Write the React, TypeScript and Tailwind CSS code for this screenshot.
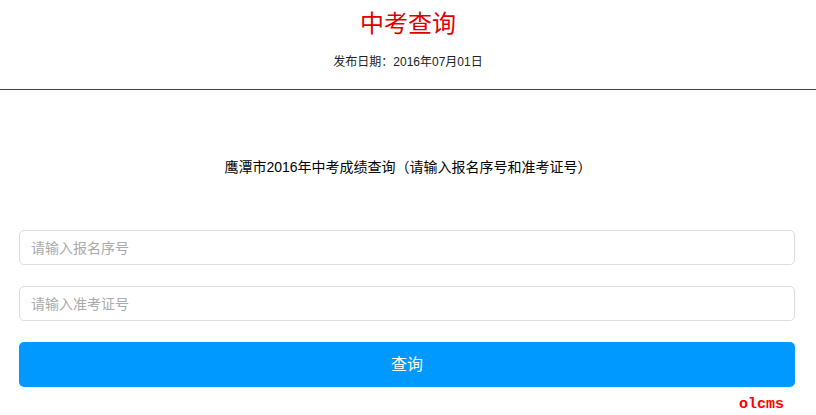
import React from "react";

export default function App() {
  return (
    <div className="w-[816px] h-[415px] bg-white overflow-hidden" style={{ fontFamily: '"Liberation Sans", "Noto Sans CJK SC", sans-serif' }}>
      <div className="h-[89px] flex flex-col items-center">
        <div className="mt-[8px] h-[32px] leading-[32px] text-[24px] text-[#dd0000]" style={{ fontFamily: '"Liberation Serif", "Noto Sans CJK SC", serif' }}>中考查询</div>
        <div className="mt-[14px] h-[16px] leading-[16px] text-[12px] text-[#222]">发布日期：2016年07月01日</div>
      </div>
      <div className="h-[1px] bg-[#dd0000]" />
      <div className="mt-[67px] h-[20px] leading-[20px] text-center text-[14px] text-black">鹰潭市2016年中考成绩查询（请输入报名序号和准考证号）</div>
      <div className="pl-[19px] pr-[21px] mt-[53px] flex flex-col">
        <input
          className="h-[35px] w-full border border-[#dddddd] rounded-[5px] px-[11px] text-[14px] outline-none placeholder:text-[#aaaaaa]"
          placeholder="请输入报名序号"
        />
        <input
          className="mt-[21px] h-[35px] w-full border border-[#dddddd] rounded-[5px] px-[11px] text-[14px] outline-none placeholder:text-[#aaaaaa]"
          placeholder="请输入准考证号"
        />
        <button className="mt-[21px] h-[45px] w-full bg-[#0099ff] rounded-[5px] text-white text-[16px]">查询</button>
        <div className="mt-[9px] flex justify-end pr-[11px]">
          <span className="text-[15px] leading-[18px] font-bold text-[#ff0000]" style={{ fontFamily: '"Liberation Mono", monospace' }}>olcms</span>
        </div>
      </div>
    </div>
  );
}
